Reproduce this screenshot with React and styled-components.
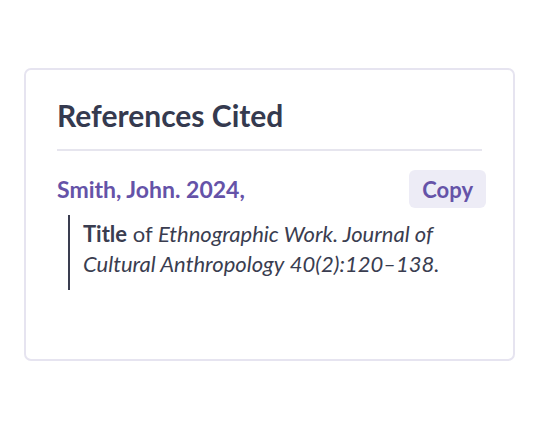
import React from 'react';
import styled, { createGlobalStyle } from 'styled-components';

const GlobalStyle = createGlobalStyle`
  html, body {
    margin: 0;
    padding: 0;
    background: #ffffff;
    font-family: Lato, "Noto Sans", sans-serif;
  }
`;

const Page = styled.div`
  width: 540px;
  height: 430px;
  box-sizing: border-box;
  padding: 68px 25px 0 24px;
`;

const Card = styled.section`
  box-sizing: border-box;
  height: 293px;
  border: 2px solid #e6e4f0;
  border-radius: 7px;
  padding: 27px 31px 0 31px;
`;

const Title = styled.h2`
  margin: 0;
  font-size: 30px;
  line-height: 36px;
  font-weight: 700;
  color: #353a4f;
  padding-bottom: 16px;
  border-bottom: 2px solid #e6e5ee;
`;

const EntryHead = styled.div`
  display: flex;
  align-items: center;
  justify-content: space-between;
  margin-top: 19px;
  margin-right: -4px;
`;

const Author = styled.span`
  font-size: 23px;
  font-weight: 700;
  color: #6553a8;
`;

const CopyButton = styled.button`
  font-family: inherit;
  font-size: 22px;
  font-weight: 700;
  color: #6553a8;
  background: #edecf6;
  border: none;
  border-radius: 6px;
  padding: 0 13px;
  height: 38px;
  cursor: pointer;
`;

const Quote = styled.blockquote`
  margin: 7px 0 0 11px;
  padding: 4px 0 11px 13px;
  border-left: 2px solid #3a3d50;
  font-size: 22px;
  line-height: 30px;
  color: #3a3d50;
`;

const Line = styled.span`
  display: block;
`;

const App = () => (
  <>
    <GlobalStyle />
    <Page>
      <Card>
        <Title>References Cited</Title>
        <EntryHead>
          <Author>Smith, John. 2024,</Author>
          <CopyButton>Copy</CopyButton>
        </EntryHead>
        <Quote>
          <Line>
            <strong>Title</strong> of <em>Ethnographic Work. Journal of</em>
          </Line>
          <Line>
            <em>Cultural Anthropology</em> <em>40(2):120–138.</em>
          </Line>
        </Quote>
      </Card>
    </Page>
  </>
);

export default App;
